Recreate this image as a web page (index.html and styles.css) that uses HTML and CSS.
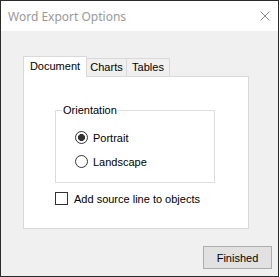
FILE: index.html
```html
<!DOCTYPE html>
<html lang="en">
<head>
  <meta charset="UTF-8">
  <title>Word Export Options</title>
  <link rel="stylesheet" href="styles.css">
</head>
<body>
  <div class="window">
    <div class="titlebar">
      <span class="title">Word Export Options</span>
      <svg class="close" width="10" height="10" viewBox="0 0 10 10">
        <path d="M0.5 0.5 L9.5 9.5 M9.5 0.5 L0.5 9.5" stroke="#8a8a8a" stroke-width="1" fill="none"/>
      </svg>
    </div>

    <div class="dialog-body">
      <div class="tabs">
        <div class="tab tab-active">Document</div>
        <div class="tab tab-charts">Charts</div>
        <div class="tab tab-tables">Tables</div>
      </div>
      <div class="tab-panel">
        <fieldset class="group">
          <legend>Orientation</legend>
          <label class="option">
            <input type="radio" name="orientation" checked>
            <span>Portrait</span>
          </label>
          <label class="option">
            <input type="radio" name="orientation">
            <span>Landscape</span>
          </label>
        </fieldset>
        <label class="check">
          <input type="checkbox">
          <span>Add source line to objects</span>
        </label>
      </div>
      <button type="button" class="btn">Finished</button>
    </div>
  </div>
</body>
</html>
```

FILE: styles.css
```css
* {
  margin: 0;
  padding: 0;
  box-sizing: border-box;
}
body {
  background: #fff;
  font-family: "Liberation Sans", Arial, sans-serif;
  font-size: 11px;
  color: #000;
}
.window {
  width: 279px;
  height: 277px;
  border: 1px solid #2b2b2b;
  background: #f0f0f0;
  display: flex;
  flex-direction: column;
}
.titlebar {
  height: 30px;
  background: #fff;
  display: flex;
  align-items: center;
  justify-content: space-between;
  padding: 0 8px 0 7px;
}
.title {
  font-family: "Noto Sans", sans-serif;
  font-size: 12px;
  color: #999;
}
.close {
  display: block;
  margin-top: -1px;
}
.dialog-body {
  flex: 1;
  display: flex;
  flex-direction: column;
  padding: 25px 6px 7px 22px;
}
.tabs {
  display: flex;
  align-items: flex-end;
}
.tab {
  height: 18px;
  line-height: 17px;
  text-align: center;
  background: #f0f0f0;
  border: 1px solid #d9d9d9;
  border-left: none;
  border-bottom: none;
}
.tab-active {
  position: relative;
  z-index: 1;
  width: 64px;
  height: 21px;
  padding-top: 1px;
  margin-bottom: -1px;
  background: #fff;
  border-left: 1px solid #d9d9d9;
}
.tab-charts {
  width: 40px;
}
.tab-tables {
  width: 43px;
}
.tab-panel {
  width: 226px;
  height: 153px;
  background: #fff;
  border: 1px solid #d9d9d9;
  padding: 27px 0 0 31px;
}
.group {
  width: 160px;
  height: 79px;
  border: 1px solid #dcdcdc;
  padding: 0;
}
.group legend {
  line-height: 13px;
  padding: 0 1px;
  margin-left: 6px;
}
.option {
  display: flex;
  align-items: center;
  gap: 5px;
  height: 13px;
  margin: 11px 0 0 19px;
}
.option:first-of-type {
  margin-top: 14px;
}
.option input {
  appearance: none;
  width: 13px;
  height: 13px;
  border: 1px solid #333;
  border-radius: 50%;
  background: #fff;
}
.option input:checked {
  background: radial-gradient(circle, #333 0 3.2px, #fff 3.8px);
}
.check {
  display: flex;
  align-items: center;
  gap: 6px;
  height: 13px;
  margin-top: 9px;
}
.check input {
  appearance: none;
  width: 13px;
  height: 13px;
  border: 1px solid #333;
  background: #fff;
}
.btn {
  align-self: flex-end;
  margin-top: auto;
  width: 69px;
  height: 23px;
  border: 1px solid #adadad;
  background: #e1e1e1;
  font-family: "Liberation Sans", Arial, sans-serif;
  font-size: 11px;
  color: #000;
}
```
